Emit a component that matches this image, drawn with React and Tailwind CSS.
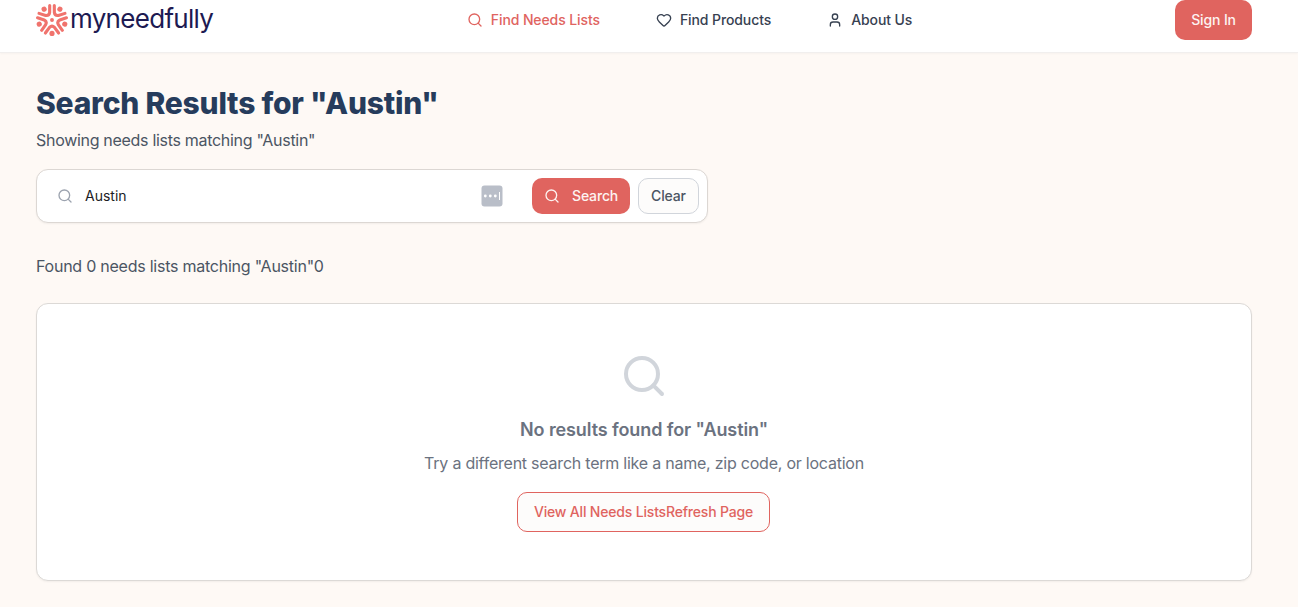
import { Search, Heart, User } from "lucide-react";

function LogoMark() {
  return (
    <svg className="h-8 w-8 shrink-0" viewBox="-15.5 -15.5 31 31" fill="none" stroke="#f0736d" strokeWidth="3" strokeLinecap="round" strokeLinejoin="round">
      <circle r="1.9" fill="#f0736d" stroke="none" />
      {[0, 72, 144, 216, 288].map((a) => (
        <g key={a} transform={`rotate(${a})`}>
          <circle cy="13" r="2.5" fill="#f0736d" stroke="none" />
          <path d="M-6.4 12.6 L-2.4 7.2 Q0 4.8 2.4 7.2 L6.4 12.6" />
        </g>
      ))}
    </svg>
  );
}

export default function App() {
  return (
    <div className="min-h-screen bg-[#fef9f5] font-['Inter',sans-serif] text-[#1f2937]">
      <header className="h-[53px] border-b border-[#f1efee] bg-white shadow-[0_1px_2px_rgba(0,0,0,0.03)]">
        <div className="flex h-10 w-[1288px] items-center justify-between px-9">
          <a className="flex w-[168px] items-center">
            <LogoMark />
            <span className="-mt-0.5 ml-0.5 text-[26px] leading-8 tracking-[-0.7px] text-[#1d1a52]">myneedfully</span>
          </a>
          <nav className="flex items-center gap-14 text-sm font-medium tracking-[-0.1px]">
            <a className="flex items-center gap-2 text-[#e0645f]"><Search size={16} />Find Needs Lists</a>
            <a className="flex items-center gap-2 text-[#374151]"><Heart size={16} />Find Products</a>
            <a className="flex items-center gap-2 text-[#374151]"><User size={16} />About Us</a>
          </nav>
          <button className="h-10 w-[77px] rounded-[10px] bg-[#e0645f] text-sm font-medium tracking-[-0.13px] text-[#fdf3f1]">Sign In</button>
        </div>
      </header>
      <main className="w-[1288px] px-9 pt-8">
        <h1 className="text-3xl leading-9 font-extrabold tracking-[-0.22px] text-[#263c5c]">Search Results for "Austin"</h1>
        <p className="mt-[7px] text-base leading-6 tracking-[-0.3px] text-[#4b5563]">Showing needs lists matching "Austin"</p>
        <div className="mt-[17px] flex h-[54px] w-[672px] items-center rounded-xl border border-[#dcd7d3] bg-white pr-2 pl-5 shadow-[0_1px_2px_rgba(0,0,0,0.05)]">
          <Search size={16} className="text-[#9ca3af]" />
          <span className="ml-3 flex-1 text-sm text-[#1c1c24]">Austin</span>
          <svg className="mr-[29px] h-[22px] w-[22px]" viewBox="0 0 22 22">
            <rect x="0.5" y="0.5" width="21" height="21" rx="3" fill="#b9bec8" />
            <g fill="#fff"><circle cx="4.3" cy="11" r="1.4" /><circle cx="9.3" cy="11" r="1.4" /><circle cx="14.3" cy="11" r="1.4" /><rect x="18" y="7" width="1" height="8" /></g>
          </svg>
          <button className="flex h-9 w-[98px] items-center rounded-[10px] bg-[#e0645f] pl-3 text-sm font-medium tracking-[-0.15px] text-[#fdf3f1]">
            <Search size={16} className="mr-3" />Search
          </button>
          <button className="ml-2 h-9 w-[61px] rounded-[10px] border border-[#d1d5db] bg-[#fdfcfb] text-sm font-medium tracking-[-0.15px] text-[#4b5563]">Clear</button>
        </div>
        <p className="mt-[31px] text-base leading-6 tracking-[-0.24px] text-[#4b5563]">Found 0 needs lists matching "Austin"0</p>
        <section className="mt-[25px] flex h-[278px] flex-col items-center rounded-xl border border-[#dcd9d6] bg-white pt-12 shadow-[0_1px_2px_rgba(0,0,0,0.05)]">
          <Search size={48} className="text-[#d1d5db]" />
          <h2 className="mt-4 text-lg leading-7 font-semibold tracking-[-0.1px] text-[#6b7280]">No results found for "Austin"</h2>
          <p className="mt-[7px] text-base leading-6 tracking-[-0.23px] text-[#6b7280]">Try a different search term like a name, zip code, or location</p>
          <button className="mt-[17px] mr-px h-10 w-[253px] rounded-[10px] border border-[#e0645f] bg-[#fdfcfb] text-sm font-medium tracking-[-0.18px] whitespace-nowrap text-[#e0645f]">View All Needs ListsRefresh Page</button>
        </section>
      </main>
    </div>
  );
}
